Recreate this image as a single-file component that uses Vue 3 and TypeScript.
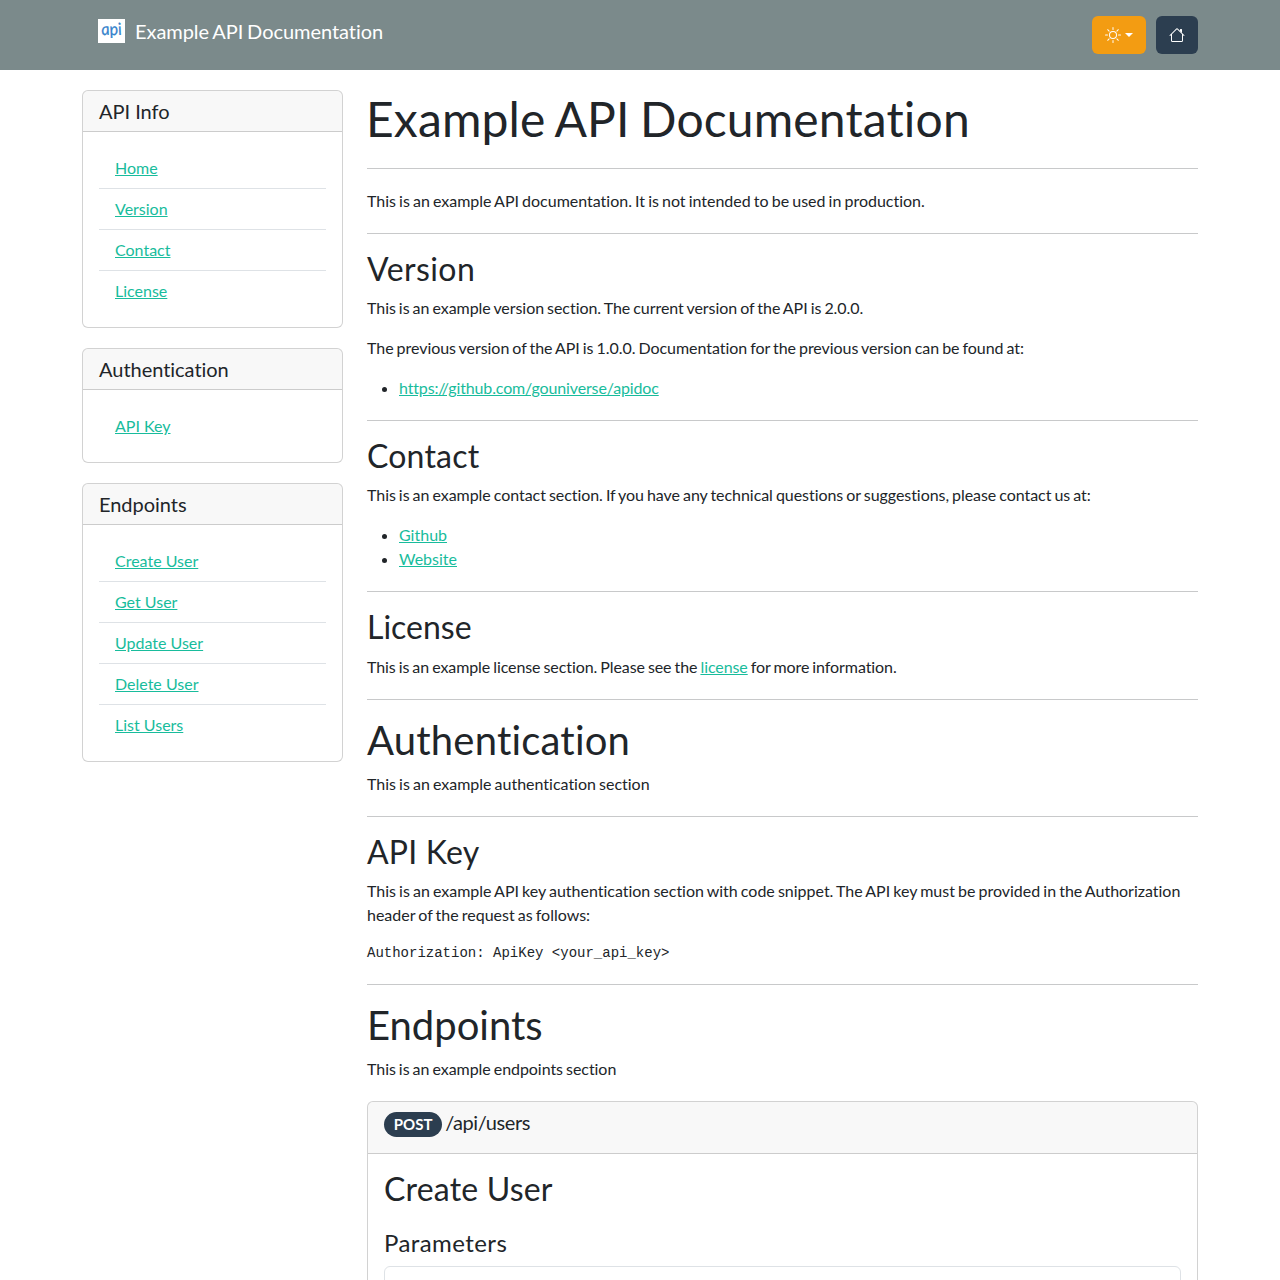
<script setup lang="ts">
interface MenuGroup {
  title: string
  items: string[]
}

const menu: MenuGroup[] = [
  { title: 'API Info', items: ['Home', 'Version', 'Contact', 'License'] },
  { title: 'Authentication', items: ['API Key'] },
  { title: 'Endpoints', items: ['Create User', 'Get User', 'Update User', 'Delete User', 'List Users'] },
]
</script>

<template>
  <div class="page">
    <header class="navbar">
      <div class="container bar">
        <a class="brand" href="#">
          <span class="logo"><span class="logo-text">api</span></span>
          <span>Example API Documentation</span>
        </a>
        <div class="actions">
          <button class="btn theme" type="button" aria-label="Theme">
            <svg width="16" height="16" viewBox="0 0 16 16" fill="currentColor">
              <path d="M8 11a3 3 0 1 1 0-6 3 3 0 0 1 0 6zm0 1a4 4 0 1 0 0-8 4 4 0 0 0 0 8zM8 0a.5.5 0 0 1 .5.5v2a.5.5 0 0 1-1 0v-2A.5.5 0 0 1 8 0zm0 13a.5.5 0 0 1 .5.5v2a.5.5 0 0 1-1 0v-2A.5.5 0 0 1 8 13zm8-5a.5.5 0 0 1-.5.5h-2a.5.5 0 0 1 0-1h2a.5.5 0 0 1 .5.5zM3 8a.5.5 0 0 1-.5.5h-2a.5.5 0 0 1 0-1h2A.5.5 0 0 1 3 8zm10.657-5.657a.5.5 0 0 1 0 .707l-1.414 1.415a.5.5 0 1 1-.707-.708l1.414-1.414a.5.5 0 0 1 .707 0zm-9.193 9.193a.5.5 0 0 1 0 .707L3.05 13.657a.5.5 0 0 1-.707-.707l1.414-1.414a.5.5 0 0 1 .707 0zm9.193 2.121a.5.5 0 0 1-.707 0l-1.414-1.414a.5.5 0 0 1 .707-.707l1.414 1.414a.5.5 0 0 1 0 .707zM4.464 4.465a.5.5 0 0 1-.707 0L2.343 3.05a.5.5 0 1 1 .707-.707l1.414 1.414a.5.5 0 0 1 0 .708z" />
            </svg>
            <span class="caret"></span>
          </button>
          <button class="btn home" type="button" aria-label="Home">
            <svg width="16" height="16" viewBox="0 0 16 16" fill="currentColor">
              <path fill-rule="evenodd" d="M2 13.5V7h1v6.5a.5.5 0 0 0 .5.5h9a.5.5 0 0 0 .5-.5V7h1v6.5a1.5 1.5 0 0 1-1.5 1.5h-9A1.5 1.5 0 0 1 2 13.5zm11-11V6l-2-2V2.5a.5.5 0 0 1 .5-.5h1a.5.5 0 0 1 .5.5z" />
              <path fill-rule="evenodd" d="M7.293 1.5a1 1 0 0 1 1.414 0l6.647 6.646a.5.5 0 0 1-.708.708L8 2.207 1.354 8.854a.5.5 0 1 1-.708-.708L7.293 1.5z" />
            </svg>
          </button>
        </div>
      </div>
    </header>

    <div class="container columns">
      <aside class="sidebar">
        <nav v-for="group in menu" :key="group.title" class="card">
          <div class="card-header"><h5>{{ group.title }}</h5></div>
          <div class="card-body">
            <ul class="menu">
              <li v-for="item in group.items" :key="item"><a href="#">{{ item }}</a></li>
            </ul>
          </div>
        </nav>
      </aside>

      <main class="content">
        <h1>Example API Documentation</h1>
        <hr class="title-rule">
        <p class="normal">This is an example API documentation. It is not intended to be used in production.</p>
        <hr>
        <section>
          <h3 class="widest">Version</h3>
          <p>This is an example version section. The current version of the API is 2.0.0.</p>
          <p>The previous version of the API is 1.0.0. Documentation for the previous version can be found at:</p>
          <ul><li><a class="url" href="#">https://github.com/gouniverse/apidoc</a></li></ul>
        </section>
        <hr>
        <section>
          <h3 class="wide">Contact</h3>
          <p>This is an example contact section. If you have any technical questions or suggestions, please contact us at:</p>
          <ul>
            <li><a href="#">Github</a></li>
            <li><a href="#">Website</a></li>
          </ul>
        </section>
        <hr>
        <section>
          <h3>License</h3>
          <p class="tight">This is an example license section. Please see the <a href="#">license</a> for more information.</p>
        </section>
        <hr>
        <section>
          <h2 class="wide">Authentication</h2>
          <p class="normal">This is an example authentication section</p>
        </section>
        <hr>
        <section>
          <h3 class="wide">API Key</h3>
          <p class="normal">This is an example API key authentication section with code snippet. The API key must be provided in the Authorization header of the request as follows:</p>
          <pre>Authorization: ApiKey &lt;your_api_key&gt;</pre>
        </section>
        <hr>
        <section>
          <h2>Endpoints</h2>
          <p>This is an example endpoints section</p>
        </section>
        <article class="card endpoint">
          <div class="card-header endpoint-header">
            <h5><span class="badge">POST</span> <span class="path">/api/users</span></h5>
          </div>
          <div class="card-body">
            <h3 class="wide">Create User</h3>
            <h4 class="widest">Parameters</h4>
            <div class="card params"></div>
          </div>
        </article>
      </main>
    </div>
  </div>
</template>

<style>
body {
  margin: 0;
}
</style>

<style scoped>
.page,
.page * {
  box-sizing: border-box;
}
.page {
  height: 1280px;
  overflow: hidden;
  background: #fff;
  color: #212529;
  font: 400 16px/1.5 Lato, sans-serif;
  font-variant-ligatures: none;
}
.container {
  width: 1140px;
  margin: 0 auto;
  padding: 0 12px;
}
.navbar {
  height: 70px;
  background: #7b8a8b;
}
.bar {
  display: flex;
  justify-content: space-between;
  align-items: flex-start;
  padding-top: 16px;
}
.brand {
  display: flex;
  align-items: center;
  gap: 10px;
  height: 30px;
  padding-left: 16px;
  color: #fff;
  font-size: 20px;
  letter-spacing: -0.05px;
  word-spacing: -1.2px;
  text-decoration: none;
}
.logo {
  display: flex;
  justify-content: center;
  width: 27px;
  height: 24px;
  background: #fff;
}
.logo-text {
  color: #3583cc;
  font: italic 400 17px/20px Lato, sans-serif;
  letter-spacing: -0.2px;
  -webkit-text-stroke: 0.2px #3583cc;
  transform: skewX(9deg) scaleX(0.96);
}
.actions {
  display: flex;
  gap: 10px;
}
.btn {
  display: flex;
  align-items: center;
  height: 38px;
  padding: 0 13px;
  border: 0;
  border-radius: 6px;
  color: #fff;
  font-size: 16px;
}
.theme {
  background: #f39c12;
}
.home {
  background: #2c3e50;
}
.caret {
  margin-left: 4px;
  border: 4px solid transparent;
  border-top-color: #fff;
  border-bottom: 0;
}
.columns {
  display: flex;
  gap: 24px;
  padding-top: 20px;
}
.sidebar {
  flex: 0 0 261px;
}
.content {
  flex: 1;
  min-width: 0;
}
.card {
  margin-bottom: 20px;
  border: 1px solid rgba(0, 0, 0, 0.176);
  border-radius: 6px;
  background: #fff;
}
.card-header {
  padding: 8px 16px;
  border-bottom: 1px solid rgba(0, 0, 0, 0.176);
  border-radius: 5px 5px 0 0;
  background: rgba(33, 37, 41, 0.03);
}
.card-body {
  padding: 16px;
}
.menu {
  margin: 0;
  padding: 0;
  list-style: none;
}
.menu li {
  padding: 8px 16px;
  border-bottom: 1px solid #dee2e6;
}
.menu li:last-child {
  border-bottom: 0;
}
h1,
h2,
h3,
h4,
h5 {
  margin: 0 0 8px;
  font-weight: 400;
  line-height: 1.2;
}
h1 {
  margin: 0 0 0 -1px;
  font-size: 48px;
  letter-spacing: 0.15px;
  word-spacing: -2px;
}
h2 {
  font-size: 40px;
}
h3 {
  font-size: 32px;
}
h4 {
  font-size: 24px;
}
h5 {
  margin: 0;
  font-size: 20px;
  letter-spacing: -0.03px;
}
.wide {
  letter-spacing: 0.2px;
}
.widest {
  letter-spacing: 0.42px;
}
hr {
  height: 1px;
  margin: 20px 0 16px;
  border: 0;
  background: #c8c9ca;
}
.title-rule {
  margin-bottom: 20px;
}
p,
section > ul,
pre {
  margin: 0 0 16px;
}
p {
  letter-spacing: -0.055px;
  word-spacing: -0.96px;
}
p.normal {
  letter-spacing: -0.01px;
}
p.tight {
  letter-spacing: -0.085px;
}
.url {
  letter-spacing: -0.14px;
}
.content > p,
section > :last-child {
  margin-bottom: 0;
}
section > ul {
  padding-left: 32px;
}
a:not(.brand) {
  color: #18bc9c;
  text-decoration: underline;
}
pre {
  font: 14px/21px "Liberation Mono", monospace;
}
.endpoint {
  margin-top: 20px;
}
.endpoint-header h5 {
  margin-bottom: 8px;
  letter-spacing: 0;
  word-spacing: -2px;
}
.path {
  letter-spacing: -0.43px;
}
.badge {
  display: inline-block;
  padding: 0.35em 0.65em;
  border-radius: 50px;
  background: #2c3e50;
  color: #fff;
  font-size: 0.75em;
  font-weight: 700;
  line-height: 1;
  vertical-align: baseline;
}
.endpoint h3 {
  margin-bottom: 20px;
}
.params {
  height: 200px;
  border-color: #dee2e6;
}
</style>
